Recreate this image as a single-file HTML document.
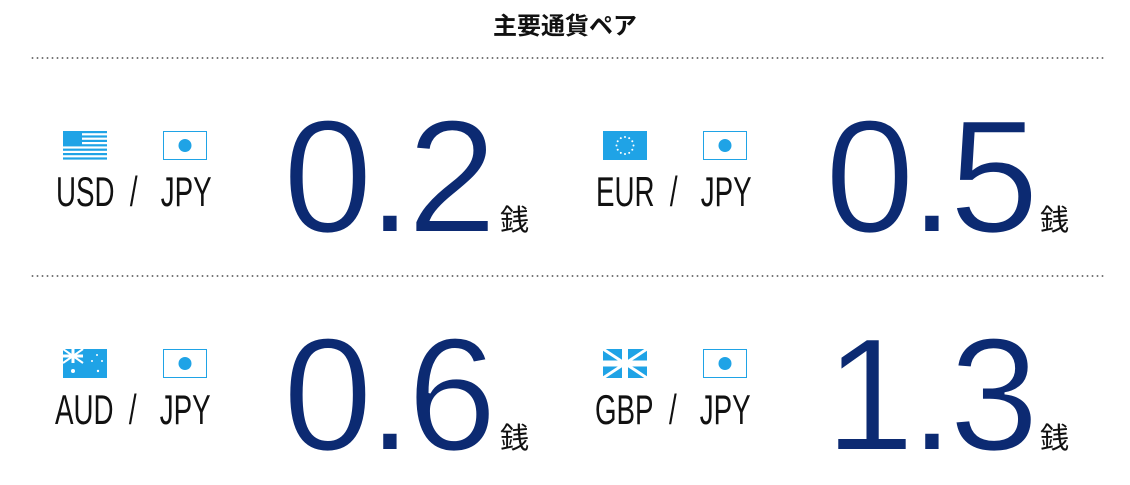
<!DOCTYPE html>
<html><head><meta charset="utf-8"><style>
body{margin:0;width:1130px;height:479px;background:#fff;position:relative;overflow:hidden;font-family:"Liberation Sans",sans-serif}
.a{position:absolute}
.title{left:0;width:1130px;top:6px;text-align:center;font:bold 24px "Liberation Sans","Noto Sans CJK JP",sans-serif;color:#111}
.dl{left:30px;width:1074px;height:2px;background-image:radial-gradient(circle,#777 0.8px,transparent 1.1px);background-size:5px 2px}
.cur{font-size:42px;line-height:42px;color:#111;transform:scaleX(0.66);transform-origin:0 0;white-space:nowrap}
.num{font-size:161px;line-height:161px;color:#0c2a72;letter-spacing:-5px;white-space:nowrap;-webkit-text-stroke:2px #fff;paint-order:normal}
.sen{font:29px "Noto Sans CJK JP",sans-serif;color:#111;line-height:32px}
svg{position:absolute}
</style></head><body>
<div class="a title">主要通貨ペア</div>
<div class="a dl" style="top:57px"></div>
<div class="a dl" style="top:275px"></div>

<svg style="left:63px;top:131px" width="44" height="29" viewBox="0 0 44 29">
<g fill="#1fa3e6"><rect y="0" width="44" height="2.2"/><rect y="4.4" width="44" height="2.2"/><rect y="8.8" width="44" height="2.2"/><rect y="13.2" width="44" height="2.2"/><rect y="17.6" width="44" height="2.2"/><rect y="22" width="44" height="2.2"/><rect y="26.4" width="44" height="2.2"/><rect width="19" height="15" /></g></svg>
<svg style="left:163px;top:131px" width="44" height="29"><rect x="0.5" y="0.5" width="43" height="28" fill="#fff" stroke="#1fa3e6"/><circle cx="22" cy="14.5" r="6.5" fill="#1fa3e6"/></svg>
<div class="a cur" style="left:56px;top:171px">USD&nbsp;&nbsp;/&nbsp;&nbsp;&nbsp;JPY</div>
<div class="a num" style="left:283px;top:97px">0.2</div>
<div class="a sen" style="left:500px;top:202px">銭</div>

<svg style="left:603px;top:131px" width="44" height="29"><rect width="44" height="29" fill="#1fa3e6"/><g fill="#fff">
<circle cx="22" cy="6" r="1"/><circle cx="26.2" cy="7.1" r="1"/><circle cx="29.3" cy="10.3" r="1"/><circle cx="30.5" cy="14.5" r="1"/><circle cx="29.3" cy="18.7" r="1"/><circle cx="26.2" cy="21.9" r="1"/><circle cx="22" cy="23" r="1"/><circle cx="17.8" cy="21.9" r="1"/><circle cx="14.7" cy="18.7" r="1"/><circle cx="13.5" cy="14.5" r="1"/><circle cx="14.7" cy="10.3" r="1"/><circle cx="17.8" cy="7.1" r="1"/></g></svg>
<svg style="left:703px;top:131px" width="44" height="29"><rect x="0.5" y="0.5" width="43" height="28" fill="#fff" stroke="#1fa3e6"/><circle cx="22" cy="14.5" r="6.5" fill="#1fa3e6"/></svg>
<div class="a cur" style="left:596px;top:171px">EUR&nbsp;&nbsp;/&nbsp;&nbsp;&nbsp;JPY</div>
<div class="a num" style="left:825px;top:97px">0.5</div>
<div class="a sen" style="left:1040px;top:202px">銭</div>

<svg style="left:63px;top:349px" width="44" height="29"><rect width="44" height="29" fill="#1fa3e6"/>
<g stroke="#fff" stroke-width="2"><line x1="0" y1="0" x2="20" y2="14"/><line x1="20" y1="0" x2="0" y2="14"/></g>
<g stroke="#fff" stroke-width="3"><line x1="10" y1="0" x2="10" y2="14"/><line x1="0" y1="7" x2="20" y2="7"/></g>
<g fill="#fff"><circle cx="10" cy="22" r="2"/><circle cx="34" cy="6" r="1"/><circle cx="39" cy="12" r="1"/><circle cx="29" cy="12" r="1"/><circle cx="35" cy="22" r="1.2"/></g></svg>
<svg style="left:163px;top:349px" width="44" height="29"><rect x="0.5" y="0.5" width="43" height="28" fill="#fff" stroke="#1fa3e6"/><circle cx="22" cy="14.5" r="6.5" fill="#1fa3e6"/></svg>
<div class="a cur" style="left:55px;top:389px">AUD&nbsp;&nbsp;/&nbsp;&nbsp;&nbsp;JPY</div>
<div class="a num" style="left:283px;top:315px">0.6</div>
<div class="a sen" style="left:500px;top:420px">銭</div>

<svg style="left:603px;top:349px" width="44" height="29"><rect width="44" height="29" fill="#1fa3e6"/>
<g stroke="#fff" stroke-width="3"><line x1="0" y1="0" x2="44" y2="29"/><line x1="44" y1="0" x2="0" y2="29"/></g>
<g stroke="#fff" stroke-width="6"><line x1="22" y1="0" x2="22" y2="29"/><line x1="0" y1="14.5" x2="44" y2="14.5"/></g></svg>
<svg style="left:703px;top:349px" width="44" height="29"><rect x="0.5" y="0.5" width="43" height="28" fill="#fff" stroke="#1fa3e6"/><circle cx="22" cy="14.5" r="6.5" fill="#1fa3e6"/></svg>
<div class="a cur" style="left:595px;top:389px">GBP&nbsp;&nbsp;/&nbsp;&nbsp;&nbsp;JPY</div>
<div class="a num" style="left:825px;top:315px">1.3</div>
<div class="a sen" style="left:1040px;top:420px">銭</div>
</body></html>
